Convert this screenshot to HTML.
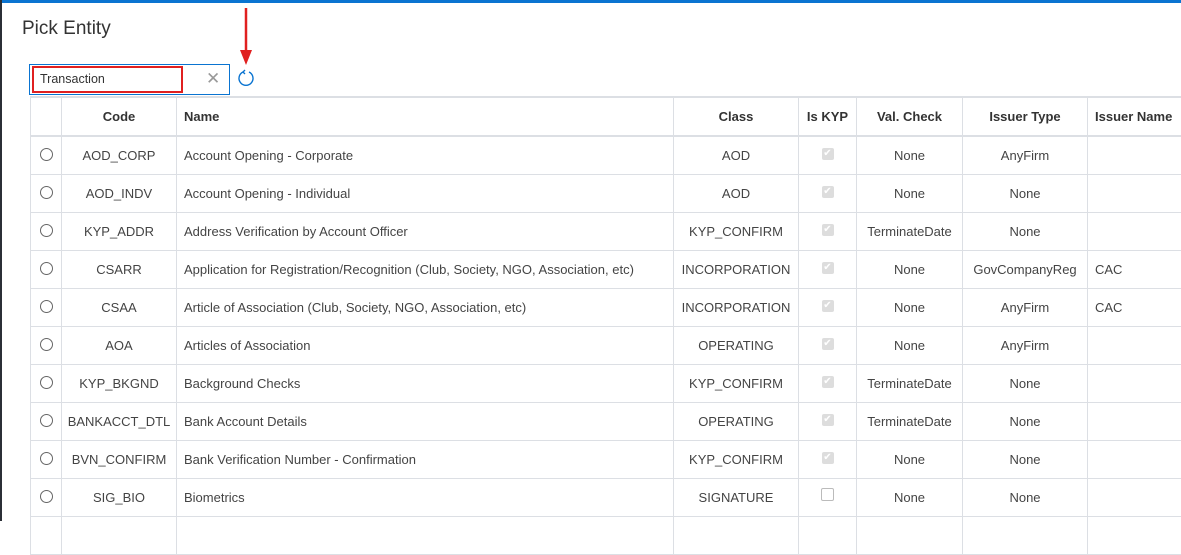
<!DOCTYPE html>
<html><head><style>
body{margin:0;width:1181px;height:521px;overflow:hidden;background:#fff;font-family:"Liberation Sans",sans-serif;position:relative;color:#333;}
.top{position:absolute;left:0;top:0;width:1181px;height:3px;background:#0a74d1;}
.lft{position:absolute;left:0;top:0;width:2px;height:521px;background:#2b2f36;}
h1{position:absolute;left:22px;top:18px;margin:0;font-size:19px;font-weight:normal;color:#333;}
.search{position:absolute;left:29px;top:64px;width:199px;height:29px;border:1px solid #0a74d1;}
.inp{position:absolute;left:2px;top:1px;width:141px;height:23px;border:2px solid #e02020;font-size:12.5px;line-height:23px;padding-left:6px;color:#333;}
.x{position:absolute;left:176px;top:4px;font-size:17px;color:#999;}
table{position:absolute;left:30px;top:96px;border-collapse:collapse;table-layout:fixed;width:1170px;font-size:13px;color:#444;}
td,th{border:1px solid #dcdfe4;height:37px;padding:0 7px;text-align:center;white-space:nowrap;overflow:hidden;}
th{color:#333;font-weight:bold;border-top:2px solid #dcdfe4;border-bottom:2px solid #dcdfe4;}
td.l,th.l{text-align:left;}
.r{display:inline-block;width:11px;height:11px;border:1px solid #666;border-radius:50%;}
.c{display:inline-block;width:12px;height:12px;background:#ddd;border-radius:2px;color:#fff;font-size:10px;line-height:12px;vertical-align:4px;}
.e{display:inline-block;width:11px;height:11px;border:1px solid #bbb;border-radius:2px;vertical-align:3px;}
</style></head><body>
<div class="top"></div><div class="lft"></div>
<h1>Pick Entity</h1>
<div class="search"><div class="inp">Transaction</div><div class="x">✕</div></div>
<svg style="position:absolute;left:236px;top:68px" width="20" height="20" viewBox="0 0 20 20"><path d="M7 4 A7 7 0 1 0 13 4" fill="none" stroke="#0a74d1" stroke-width="1.4"/><path d="M9 2 L7 4 L9 6" fill="none" stroke="#0a74d1" stroke-width="1.4"/></svg>
<svg style="position:absolute;left:238px;top:8px" width="16" height="58"><line x1="8" y1="0" x2="8" y2="44" stroke="#e02020" stroke-width="2.5"/><path d="M2 42 L14 42 L8 57 Z" fill="#e02020"/></svg>
<table>
<colgroup><col style="width:31px"><col style="width:115px"><col style="width:497px"><col style="width:125px"><col style="width:58px"><col style="width:106px"><col style="width:125px"><col style="width:113px"></colgroup>
<tr><th></th><th>Code</th><th class="l">Name</th><th>Class</th><th style="padding:0">Is KYP</th><th>Val. Check</th><th>Issuer Type</th><th class="l">Issuer Name</th></tr>
<tr><td><span class="r"></span></td><td>AOD_CORP</td><td class="l">Account Opening - Corporate</td><td>AOD</td><td><span class="c">✔</span></td><td>None</td><td>AnyFirm</td><td class="l"></td></tr>
<tr><td><span class="r"></span></td><td>AOD_INDV</td><td class="l">Account Opening - Individual</td><td>AOD</td><td><span class="c">✔</span></td><td>None</td><td>None</td><td class="l"></td></tr>
<tr><td><span class="r"></span></td><td>KYP_ADDR</td><td class="l">Address Verification by Account Officer</td><td>KYP_CONFIRM</td><td><span class="c">✔</span></td><td style="padding:0">TerminateDate</td><td>None</td><td class="l"></td></tr>
<tr><td><span class="r"></span></td><td>CSARR</td><td class="l">Application for Registration/Recognition (Club, Society, NGO, Association, etc)</td><td style="padding:0">INCORPORATION</td><td><span class="c">✔</span></td><td>None</td><td style="padding:0">GovCompanyReg</td><td class="l">CAC</td></tr>
<tr><td><span class="r"></span></td><td>CSAA</td><td class="l">Article of Association (Club, Society, NGO, Association, etc)</td><td style="padding:0">INCORPORATION</td><td><span class="c">✔</span></td><td>None</td><td>AnyFirm</td><td class="l">CAC</td></tr>
<tr><td><span class="r"></span></td><td>AOA</td><td class="l">Articles of Association</td><td>OPERATING</td><td><span class="c">✔</span></td><td>None</td><td>AnyFirm</td><td class="l"></td></tr>
<tr><td><span class="r"></span></td><td>KYP_BKGND</td><td class="l">Background Checks</td><td>KYP_CONFIRM</td><td><span class="c">✔</span></td><td style="padding:0">TerminateDate</td><td>None</td><td class="l"></td></tr>
<tr><td><span class="r"></span></td><td style="padding:0">BANKACCT_DTL</td><td class="l">Bank Account Details</td><td>OPERATING</td><td><span class="c">✔</span></td><td style="padding:0">TerminateDate</td><td>None</td><td class="l"></td></tr>
<tr><td><span class="r"></span></td><td>BVN_CONFIRM</td><td class="l">Bank Verification Number - Confirmation</td><td>KYP_CONFIRM</td><td><span class="c">✔</span></td><td>None</td><td>None</td><td class="l"></td></tr>
<tr><td><span class="r"></span></td><td>SIG_BIO</td><td class="l">Biometrics</td><td>SIGNATURE</td><td><span class="e"></span></td><td>None</td><td>None</td><td class="l"></td></tr>
<tr><td></td><td></td><td class="l"></td><td></td><td></td><td></td><td></td><td></td></tr>
</table>
</body></html>
